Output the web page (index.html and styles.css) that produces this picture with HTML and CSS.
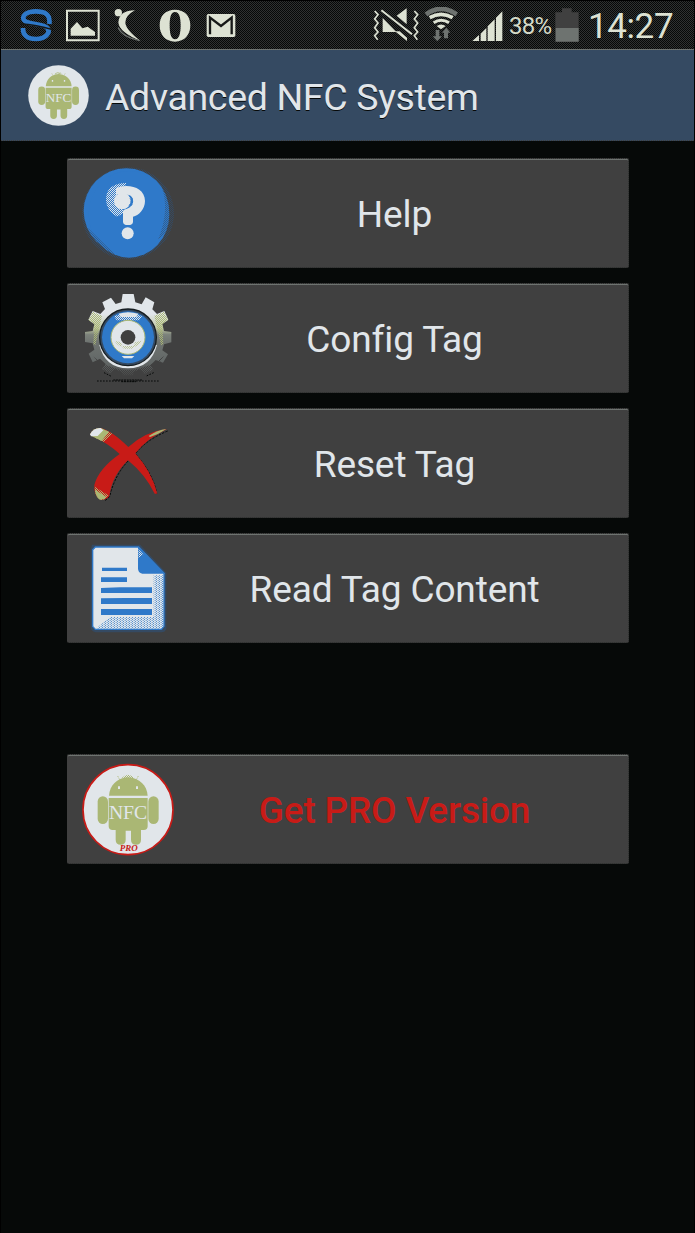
FILE: index.html
```html
<!DOCTYPE html>
<html lang="en">
<head>
<meta charset="utf-8">
<title>Advanced NFC System</title>
<link rel="stylesheet" href="styles.css">
</head>
<body>
<svg class="defs" width="0" height="0" aria-hidden="true">
  <defs>
    <pattern id="dotsWhite" width="6" height="6" patternUnits="userSpaceOnUse"><path fill="#e1e6ea" d="M0 0h3v3H0zM3 3h3v3H3z"/></pattern>
    <pattern id="dotsBlue" width="9" height="6" patternUnits="userSpaceOnUse"><path fill="#2f79c9" d="M0 0h3v3H0zM5 3h3v3H5z"/></pattern>
    <pattern id="dotsNavy" width="6" height="6" patternUnits="userSpaceOnUse"><path fill="#354a62" d="M0 0h3v3H0zM3 3h3v3H3z"/></pattern>
    <pattern id="dotsOlive" width="6" height="6" patternUnits="userSpaceOnUse"><path fill="#aab774" d="M0 0h3v3H0zM3 3h3v3H3z"/></pattern>
    <pattern id="dotsDark" width="6" height="6" patternUnits="userSpaceOnUse"><path fill="#404040" d="M0 0h3v3H0zM3 3h3v3H3z"/></pattern>
    <linearGradient id="gear" x1="0" y1="0" x2="0" y2="1">
      <stop offset=".25" stop-color="#e1e6ea"/><stop offset=".42" stop-color="#c0c8a2"/><stop offset=".5" stop-color="#7c827b"/><stop offset=".6" stop-color="#6e7370"/><stop offset=".85" stop-color="#626766"/><stop offset="1" stop-color="#484949"/>
    </linearGradient>
    <g id="robot" fill="#aab774">
      <path d="M147 152C149 122 170 99 204 97C239 99 261 122 263 152Z"/>
      <path d="M184 100Q204 78 224 100Z" fill="url(#dotsOlive)"/>
      <path d="M180 106l-7-13M228 106l7-13" stroke="#aab774" stroke-width="3" stroke-dasharray="3 3"/>
      <path d="M146 159H263V244Q263 255 251 255H243V284Q243 299 228 299Q213 299 213 284V257H197V284Q197 299 182 299Q167 299 167 284V255H158Q146 255 146 244Z"/>
      <rect x="113" y="154" width="31" height="83" rx="15.500"/>
      <rect x="265" y="154" width="31" height="83" rx="15.500"/>
      <path fill="#e1e6ea" d="M174 124h6v8h-6zM228 124h6v8h-6z"/>
    </g>
  </defs>
</svg>
<div class="screen">
  <header class="status">
    <div class="notifications">
      <svg width="34" height="36" viewBox="60 21 102 108"><path d="M148 72C152 40 130 34 108 34C77 34 65 49 72 60C80 74 130 70 142 84C154 100 134 117 108 117C83 117 68 106 69 84" fill="none" stroke="#2f79c9" stroke-width="14"/><path d="M61 72Q109 74 158 89" stroke="#161817" stroke-width="4" fill="none"/></svg>
      <svg width="34" height="36" viewBox="197 21 102 108"><path d="M200 32H295V121H200Z" fill="none" stroke="#dde2d3" stroke-width="6"/><path d="M211 107V86L230 66L246 85L262 80L284 96V107Z" fill="#dde2d3"/></svg>
      <svg width="30" height="36" viewBox="340 21 90 108"><circle cx="356" cy="38" r="11" fill="#dde2d3"/><path d="M406 31Q359 31 356 67Q358 97 423 123Q379 90 377 68Q377 46 406 31Z" fill="#dde2d3"/><path d="M356 82Q364 109 420 122" fill="none" stroke="#6e7370" stroke-width="4"/></svg>
      <svg width="34" height="36" viewBox="474 21 102 108"><path fill-rule="evenodd" fill="#dde2d3" d="M525 29C554 29 571 48 571 76S554 125 525 125S479 104 479 76S496 29 525 29ZM525 36C512 36 509 54 509 76S512 118 525 118S542 99 542 76S538 36 525 36Z"/></svg>
      <svg width="30" height="36" viewBox="619 21 90 108"><rect x="621" y="42" width="86" height="69" rx="5" fill="#dde2d3"/><path d="M631 103V53L664 78L696 53V103" fill="none" stroke="#161817" stroke-width="7"/></svg>
    </div>
    <div class="indicators">
      <svg width="49" height="36" viewBox="39 21 147 108"><g fill="none" stroke="#dde2d3" stroke-width="5"><path d="M44 33L54 44L44 57L54 69L44 83L54 96L44 107L53 119M163 33L173 44L163 57L173 69L163 83L173 96L163 107L172 119"/></g><path fill="#dde2d3" d="M68 54L109 96H68ZM140 25V73L110 47ZM105 94H119L141 113V123Z"/><path d="M64 31L156 103" stroke="#dde2d3" stroke-width="6"/></svg>
      <svg width="37" height="36" viewBox="190 21 111 108"><path d="M199 43Q244 10 291 43" fill="none" stroke="#6e7370" stroke-width="14"/><g fill="none" stroke="#dde2d3"><path d="M210 53Q244 33 279 53" stroke-width="11"/><path d="M222 68Q244 54 268 68" stroke-width="9"/></g><path d="M231 78Q244 69 258 78L244 88Z" fill="#dde2d3"/><path fill="#6e7370" d="M228 90H239V109H247L233 124L219 109H228ZM260 83L272 98H265V115H253V98H247Z"/></svg>
      <svg width="31" height="36" viewBox="338 21 93 108"><path fill="#dde2d3" d="M339 123L359 105V123ZM364 101L381 84V123H364ZM385 79L406 58V123H385ZM410 53L429 34V123H410Z"/></svg>
      <span class="percent">38%</span>
      <svg width="24" height="36" viewBox="585 21 72 108"><path d="M586 37H606V25H635V37H656V125H586Z" fill="#404040"/><path d="M587 84H656V125H587Z" fill="#6e7370"/></svg>
      <span class="clock">14:27</span>
    </div>
  </header>
  <div class="titlebar">
    <svg class="logo" width="61" height="61" viewBox="67 57 274 274"><circle cx="204" cy="194" r="136" fill="#e1e6ea"/><use href="#robot"/><text x="204" y="222" text-anchor="middle" class="nfc">NFC</text></svg>
    <h1>Advanced NFC System</h1>
  </div>
  <main>
    <button>
      <svg width="109" height="108" viewBox="24 27 327 324">
        <circle cx="204" cy="190" r="138" fill="url(#dotsNavy)"/><circle cx="199" cy="183" r="128" fill="#2f79c9"/><ellipse cx="207" cy="193" rx="121" ry="130" fill="#2f79c9"/>
        <path d="M305 111Q330 180 294 270Q345 230 330 145ZM84 234Q113 300 170 318Q120 270 84 234Z" fill="url(#dotsNavy)" opacity=".55"/>
        <path d="M200 99Q138 99 138 150Q140 185 172 200L189 190V120Z" fill="url(#dotsWhite)"/>
        <path fill="#e1e6ea" d="M168 114C205 99 255 112 255 153C255 178 236 197 219 200V215Q219 225 204 225Q189 225 189 215V184Q190 178 201 176C224 169 225 141 207 135L185 132L168 132Z"/><circle cx="187" cy="153" r="25" fill="#e1e6ea"/><path d="M208 135Q225 146 217 164Q210 175 198 177L211 160Z" fill="url(#dotsBlue)"/><circle cx="203" cy="250" r="18" fill="#e1e6ea"/>
      </svg>
      <span>Help</span>
    </button>
    <button>
      <svg width="109" height="108" viewBox="24 27 327 324">
        <path fill="url(#gear)" d="M188 57H221L226 82L245 88L257 67L283 82L277 103L291 117L313 108L325 134L307 148L312 168L334 171V202L312 208L307 226L324 238L309 263L287 255L272 270L280 284L253 297L240 283L222 290L218 301H189L184 290L165 283L150 295L126 282L137 267L120 251L98 262L86 236L103 224L98 205L75 201V171L98 168L103 148L85 134L98 108L121 117L135 102L127 82L153 68L167 87L184 82Z"/>
        <path d="M100 242Q130 278 204 286Q275 278 312 242L280 292L204 303L132 288Z" fill="url(#dotsDark)"/>
        <path d="M86 135L98 110L126 122L106 210L100 208L103 148ZM324 135L312 110L283 122L303 210L310 208L307 148Z" fill="url(#dotsOlive)"/>
        <path d="M118 210Q135 280 204 280T291 210" fill="#e1e6ea"/>
        <circle cx="204" cy="187" r="85" fill="#354a62" stroke="#161d20" stroke-width="4"/><circle cx="204" cy="187" r="78" fill="#2f79c9"/>
        <path d="M162 124Q204 102 246 124L238 136H170Z" fill="url(#dotsWhite)"/><path d="M176 116Q204 107 235 116L229 126H182Z" fill="#e1e6ea"/>
        <circle cx="204" cy="187" r="51" fill="#e1e6ea" stroke="#aab774" stroke-width="3"/><path d="M164 197Q170 212 188 216L183 202ZM244 197Q238 212 220 216L225 202ZM183 213H225L216 221H192Z" fill="url(#dotsOlive)" opacity=".7"/>
        <path d="M185 243H223L216 250H192Z" fill="#e1e6ea"/><circle cx="204" cy="187" r="22" fill="#404040"/>
        <path d="M111 318H299M132 293L154 304M281 293L257 304" stroke="#060908" stroke-width="3" stroke-dasharray="5 4"/><path d="M160 315H246M184 320H228" stroke="#060908" stroke-width="3" stroke-dasharray="6 2"/>
      </svg>
      <span>Config Tag</span>
    </button>
    <button>
      <svg width="109" height="108" viewBox="24 27 327 324">
        <path d="M323 93Q258 120 226 161Q280 222 290 281M204 183Q163 228 149 290L134 303" fill="none" stroke="#060908" stroke-width="3" stroke-dasharray="7 4"/>
        <path fill="#c81b17" d="M90 103Q100 84 122 84Q155 92 205 141Q257 94 321 87Q260 116 226 160Q275 215 292 281H284Q256 224 204 181Q156 227 148 288Q139 301 121 299Q101 288 103 255Q115 207 179 162Q145 130 101 110Z"/>
        <path d="M90 103Q101 83 122 84L157 101L132 126L99 110Z" fill="url(#dotsOlive)"/><path d="M90 103Q101 83 122 84L147 95L125 123L99 110Z" fill="#aab774"/><path d="M90 103Q101 83 122 84L130 91L113 108L93 109Z" fill="#e1e6ea"/>
        <path d="M104 260L145 286Q137 301 121 299Q104 290 104 260Z" fill="url(#dotsOlive)"/><path d="M105 269L139 291Q131 300 120 299Q106 289 105 269Z" fill="#aab774"/><path d="M266 108Q292 90 319 87Q296 103 270 111Z" fill="#aab774"/>
      </svg>
      <span>Reset Tag</span>
    </button>
    <button>
      <svg width="109" height="108" viewBox="24 27 327 324">
        <path d="M100 64H238L314 146V310Q312 317 304 317H108Q97 315 97 304V75Z" fill="none" stroke="#354a62" stroke-width="10"/>
        <path d="M106 66H236L312 145V304L304 313H106L98 304V74Z" fill="#e1e6ea" stroke="#2f79c9" stroke-width="4"/>
        <path d="M107 311L151 276H281V151H309V311Z" fill="url(#dotsBlue)" opacity=".8"/><path d="M234 64L315 146H247Q234 145 234 130Z" fill="#2f79c9"/><path d="M235 72L250 88L236 99Z" fill="url(#dotsWhite)"/>
        <path fill="#2f79c9" d="M126 128H201V138H126ZM123 157H201V171H123ZM123 189L180 187H276V204H123ZM123 220L195 219H276V237H123ZM123 252H276V270H123Z"/>
      </svg>
      <span>Read Tag Content</span>
    </button>
    <button class="pro">
      <svg width="109" height="108" viewBox="24 30 327 324">
        <circle cx="204" cy="194" r="135" fill="#e1e6ea" stroke="#c81b17" stroke-width="5"/><use href="#robot"/>
        <text x="204" y="222" text-anchor="middle" class="nfc">NFC</text>
        <text x="206" y="319" text-anchor="middle" class="pro-mark">PRO</text>
      </svg>
      <span>Get PRO Version</span>
    </button>
  </main>
</div>
</body>
</html>
```
FILE: styles.css
```css
* { box-sizing: border-box; }
body { margin: 0; background: #000; font-family: Roboto, sans-serif; color: #e1e6ea; }
.defs { display: block; height: 0; }
.screen { height: 1233px; margin: 0; border: solid #000; border-width: 1px 1px 0; background: #060908; }
svg { display: block; flex: none; }
.status {
  height: 48px; padding: 6px 0 6px 19px; display: flex; justify-content: space-between;
  background: repeating-conic-gradient(#303131 0 25%, #060908 0 50%) 0 0 / 2px 2px;
}
.notifications { display: flex; gap: 12px; }
.notifications svg:nth-child(3) { margin-left: 1px; }
.notifications svg:nth-child(4) { margin-left: 3px; }
.notifications svg:nth-child(5) { margin-left: 2px; }
.indicators { display: flex; align-items: center; width: 321px; }
.indicators svg:nth-child(2) { margin-left: 1px; }
.indicators svg:nth-child(3) { margin-left: 12px; }
.percent { width: 52px; padding: 2px 0 0 6px; font-size: 24px; line-height: 36px; letter-spacing: -.8px; color: #d5dbc8; }
.clock { margin-left: 9px; font-size: 35px; line-height: 36px; padding-top: 4px; letter-spacing: -.4px; color: #dde2d3; }
.percent, .clock { white-space: nowrap; }
.titlebar { height: 92px; padding: 0 0 0 27px; display: flex; align-items: center; gap: 16px; background: #354a62; border-top: 1px solid #6e7370; border-bottom: 1px dotted #404040; }
h1 { margin: 3px 0 0; font-size: 37.5px; font-weight: 400; line-height: 44px; letter-spacing: -.35px; white-space: nowrap; text-shadow: 0 1px 0 #060908; }
.nfc { font-family: "Liberation Serif", serif; font-size: 59px; fill: #e1e6ea; }
.pro-mark { font-family: "Liberation Serif", serif; font-size: 27px; font-style: italic; font-weight: 700; fill: #c81b17; }
main { padding: 17px 65px 0 66px; display: flex; flex-direction: column; gap: 15px; }
button { height: 110px; padding: 0 16px 0 0; display: flex; align-items: center; background: #404040; border: 1px dotted #2a2c2b; border-left-color: #404040; border-radius: 2px; box-shadow: inset 0 1px #6e7370; font: 400 37px/44px Roboto, sans-serif; letter-spacing: -.12px; color: #e1e6ea; }
button span { flex: 1; text-align: center; padding-top: 4px; white-space: nowrap; }
.pro { margin-top: 96px; color: #c81b17; font-weight: 500; letter-spacing: -.18px; }
```
